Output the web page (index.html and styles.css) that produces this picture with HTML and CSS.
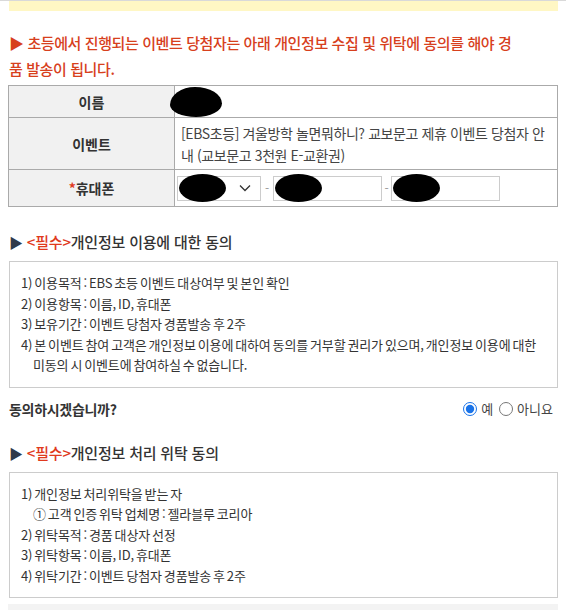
FILE: index.html
```html
<!DOCTYPE html>
<html lang="ko">
<head>
    <meta charset="UTF-8">
    <title>개인정보 수집 동의</title>
    <link rel="stylesheet" href="styles.css">
</head>
<body>
<div class="topline"></div>
<div class="container">
    <div class="notice"></div>
    <h2 class="lead">▶ 초등에서 진행되는 이벤트 당첨자는 아래 개인정보 수집 및 위탁에 동의를 해야 경품 발송이 됩니다.</h2>

    <table class="info">
        <tr class="row-name">
            <th>이름</th>
            <td><span class="blot blot-name"></span></td>
        </tr>
        <tr class="row-event">
            <th>이벤트</th>
            <td>[EBS초등] 겨울방학 놀면뭐하니? 교보문고 제휴 이벤트 당첨자 안내 (교보문고 3천원 E-교환권)</td>
        </tr>
        <tr class="row-phone">
            <th><span class="req">*</span>휴대폰</th>
            <td>
                <div class="phone">
                    <div class="sel">
                        <span class="blot blot-in"></span>
                        <svg class="chev" width="12" height="8" viewBox="0 0 12 8"><path d="M1 1.5 L6 6.5 L11 1.5" fill="none" stroke="#333" stroke-width="1.3"/></svg>
                    </div>
                    <span class="dash">-</span>
                    <div class="box"><span class="blot blot-in"></span></div>
                    <span class="dash dash-2">-</span>
                    <div class="box"><span class="blot blot-in"></span></div>
                </div>
            </td>
        </tr>
    </table>

    <h3 class="sec"><span class="tri">▶</span> <span class="must">&lt;필수&gt;</span>개인정보 이용에 대한 동의</h3>
    <div class="terms">
        <p>1) 이용목적 : EBS 초등 이벤트 대상여부 및 본인 확인</p>
        <p>2) 이용항목 : 이름, ID, 휴대폰</p>
        <p>3) 보유기간 : 이벤트 당첨자 경품발송 후 2주</p>
        <p class="hang">4) 본 이벤트 참여 고객은 개인정보 이용에 대하여 동의를 거부할 권리가 있으며, 개인정보 이용에 대한 미동의 시 이벤트에 참여하실 수 없습니다.</p>
    </div>

    <div class="agree">
        <span class="ask">동의하시겠습니까?</span>
        <div class="choice">
            <label><input type="radio" name="agree1" checked> 예</label>
            <label><input type="radio" name="agree1"> 아니요</label>
        </div>
    </div>

    <h3 class="sec"><span class="tri">▶</span> <span class="must">&lt;필수&gt;</span>개인정보 처리 위탁 동의</h3>
    <div class="terms">
        <p>1) 개인정보 처리위탁을 받는 자</p>
        <p class="sub">① 고객 인증 위탁 업체명 : 젤라블루 코리아</p>
        <p>2) 위탁목적 : 경품 대상자 선정</p>
        <p>3) 위탁항목 : 이름, ID, 휴대폰</p>
        <p>4) 위탁기간 : 이벤트 당첨자 경품발송 후 2주</p>
    </div>
    <div class="bottom"></div>
</div>
</body>
</html>
```

FILE: styles.css
```css
body {
    margin: 0;
    background-color: #fff;
    font-family: "Noto Sans CJK KR", "Noto Sans", sans-serif;
    color: #333;
}

.topline {
    height: 1px;
    background-color: #d9d9d9;
}

.container {
    margin: 0 8px;
}

.notice {
    height: 10px;
    margin-left: 1px;
    background-color: #fff7c4;
}

.lead {
    margin: 19px 34px 3px 1px;
    font-size: 15px;
    font-weight: 500;
    line-height: 26px;
    letter-spacing: -0.4px;
    color: #d7401d;
}

.info {
    width: 100%;
    border-collapse: collapse;
    border: 1px solid #aaa;
    font-size: 14px;
}

.info th {
    width: 165px;
    background-color: #f1f1f1;
    font-weight: 700;
    color: #333;
    border: 1px solid #aaa;
    padding: 0;
}

.info td {
    border: 1px solid #aaa;
    padding: 4px 2px 3px 6px;
    line-height: 22px;
    letter-spacing: -0.4px;
    color: #444;
}

.row-name th, .row-name td {
    height: 31px;
    padding-top: 0;
    padding-bottom: 0;
}

.row-name td {
    position: relative;
}

.row-phone th, .row-phone td {
    height: 36px;
}

.row-phone td {
    padding: 0 0 0 2px;
}

.req {
    color: #e03a1d;
}

.blot {
    display: inline-block;
    background-color: #000;
    border-radius: 50%;
}

.blot-name {
    position: absolute;
    left: -5px;
    top: 1px;
    width: 52px;
    height: 30px;
    border-radius: 48% 52% 50% 50% / 60% 55% 45% 40%;
}

.blot-in {
    width: 47px;
    height: 28px;
    margin: -2px 0;
}

.phone {
    display: flex;
    align-items: center;
}

.sel, .box {
    display: flex;
    align-items: center;
    height: 25px;
    border: 1px solid #ccc;
    box-sizing: border-box;
}

.sel {
    width: 84px;
    justify-content: space-between;
    padding: 0 9px 0 1px;
}

.box {
    width: 109px;
    padding-left: 1px;
}

.dash {
    width: 12px;
    text-align: center;
    color: #999;
    font-size: 12px;
}

.dash-2 {
    width: 9px;
}

.sec {
    margin: 24px 0 8px 1px;
    font-size: 15px;
    font-weight: 500;
    line-height: 22px;
    color: #333;
    letter-spacing: -0.2px;
}

.tri {
    color: #2f3a4b;
    font-size: 14px;
}

.must {
    color: #e03a1d;
}

.terms {
    margin-left: 1px;
    border: 1px solid #ccc;
    padding: 11px 14px 11px 11px;
    font-size: 13px;
    line-height: 20.5px;
    letter-spacing: -0.15px;
    word-spacing: -1.5px;
    color: #333;
}

.terms p {
    margin: 0;
}

.terms .hang {
    padding-left: 12px;
    text-indent: -12px;
}

.terms .sub {
    padding-left: 12px;
}

.agree {
    display: flex;
    justify-content: space-between;
    align-items: center;
    margin: 9px 0 0 1px;
    height: 24px;
}

.ask {
    font-size: 14px;
    font-weight: 700;
    letter-spacing: -0.3px;
}

.choice {
    display: flex;
    gap: 6px;
    font-size: 13px;
    color: #444;
    margin-right: 5px;
}

.choice label {
    display: flex;
    align-items: center;
}

.choice input {
    margin: 0 4px 0 0;
    width: 14px;
    height: 14px;
    accent-color: #1a73e8;
}

.agree + .sec {
    margin-top: 21px;
}

.bottom {
    height: 7px;
    margin-top: 6px;
    background-color: #f3f3f3;
}
```
